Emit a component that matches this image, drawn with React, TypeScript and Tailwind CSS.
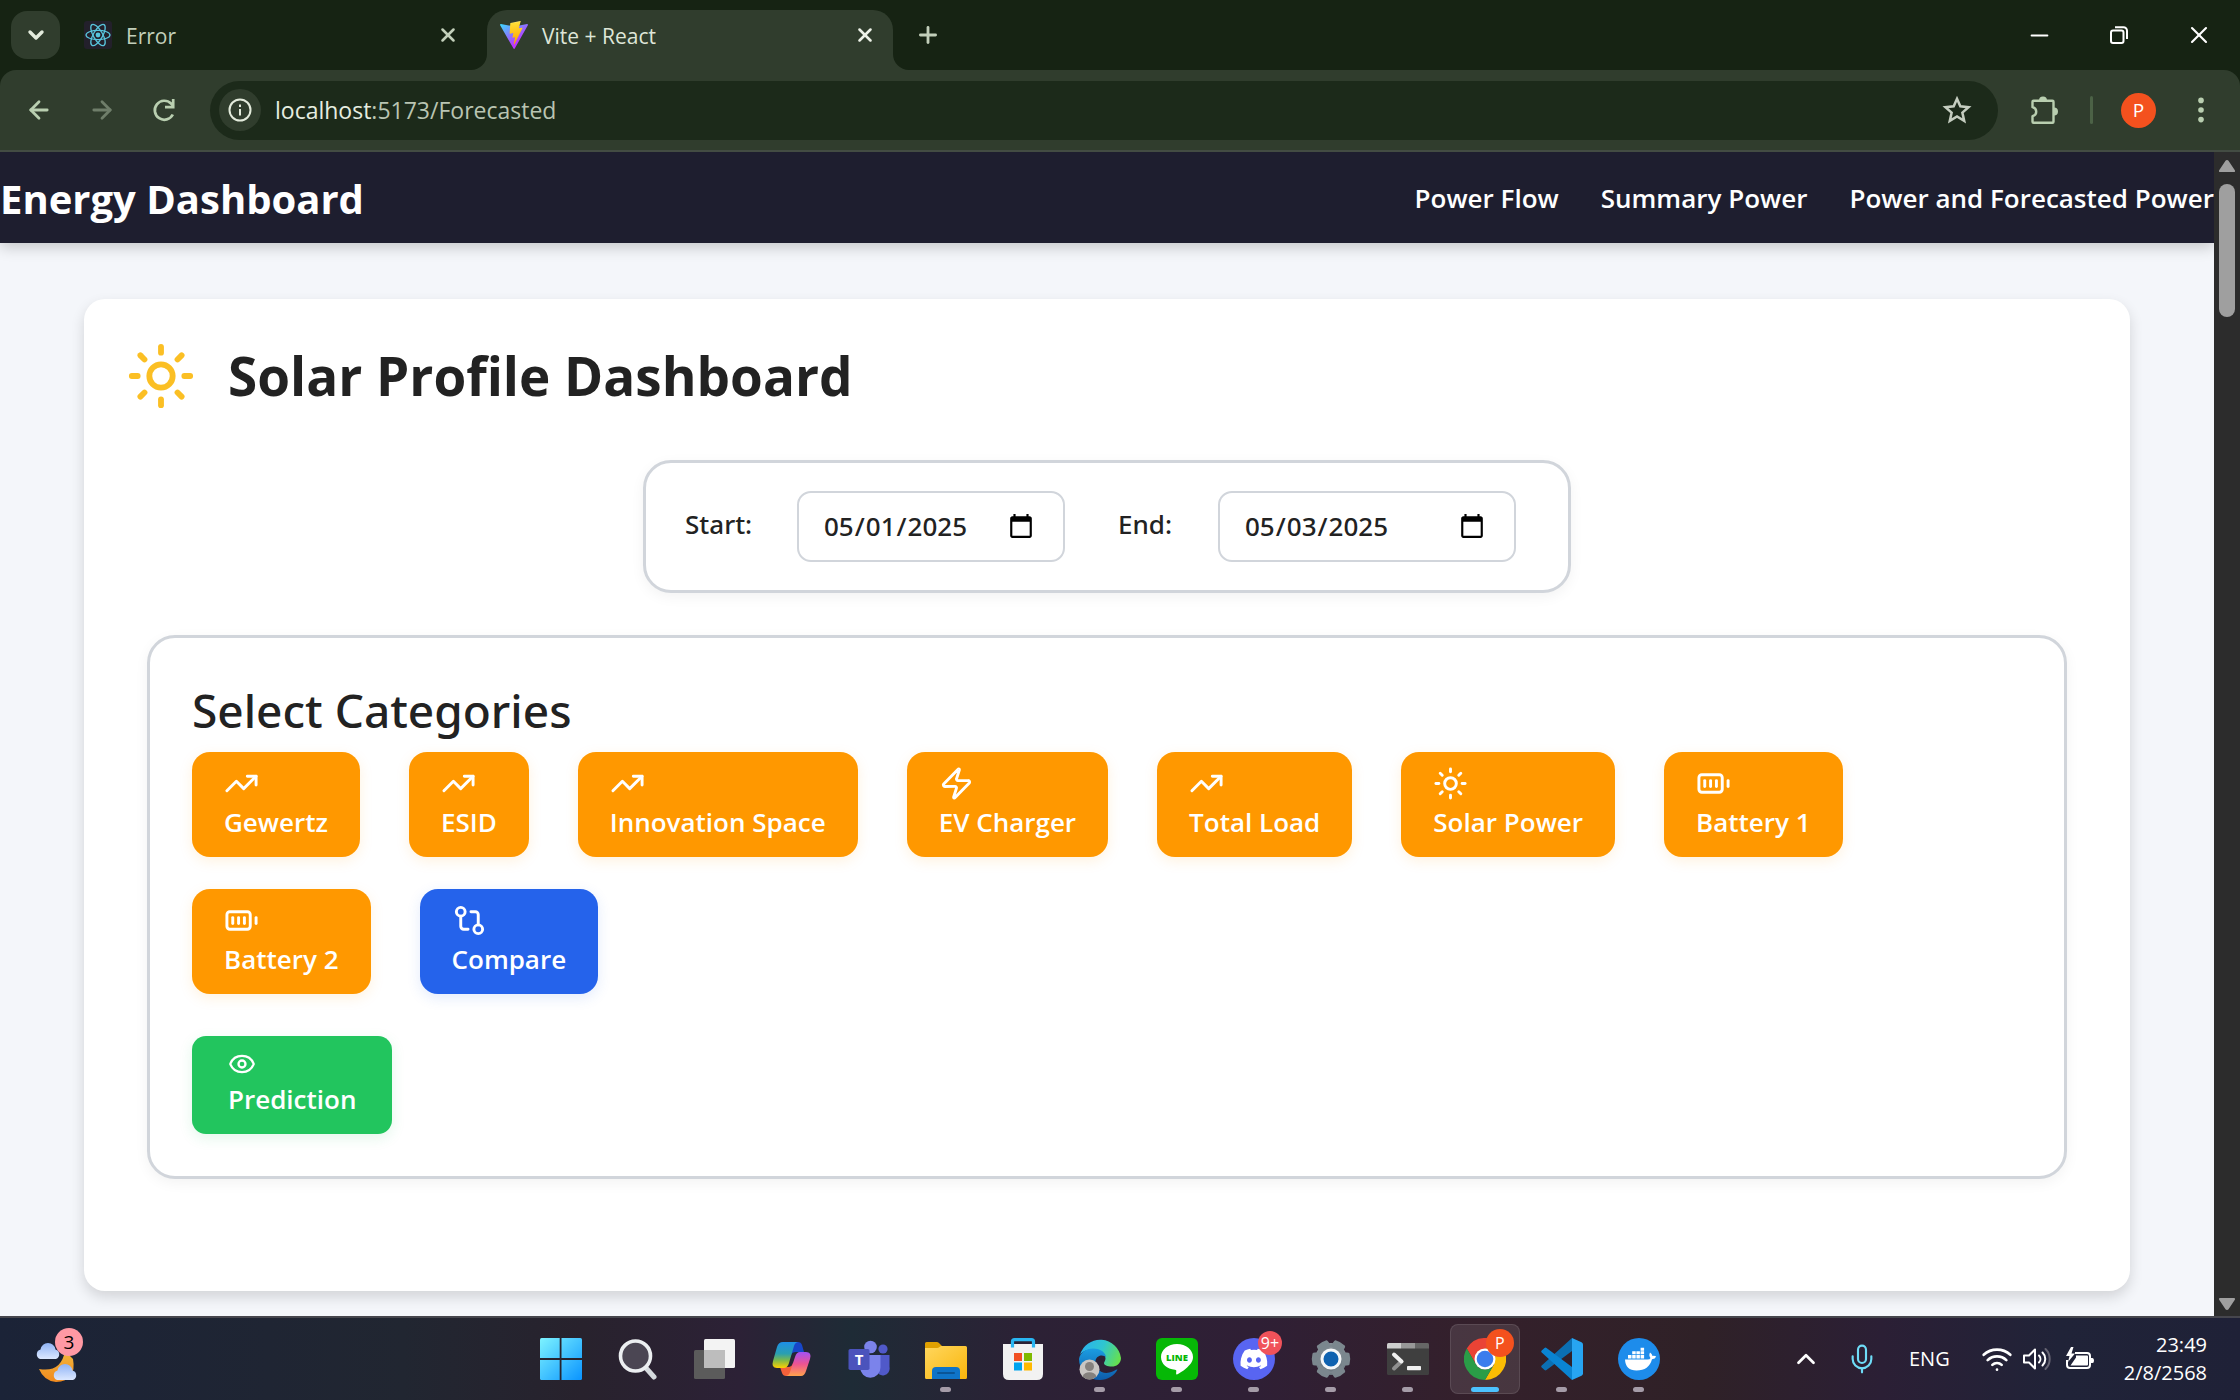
import React from "react";
import {
  TrendingUp, Zap, Sun, BatteryFull, GitCompare, Eye, X, Plus, Minus, ChevronDown, ChevronUp, ArrowLeft, ArrowRight, Mic, Wifi,
} from "lucide-react";

const categories = [
  { label: "Gewertz", Icon: TrendingUp },
  { label: "ESID", Icon: TrendingUp },
  { label: "Innovation Space", Icon: TrendingUp },
  { label: "EV Charger", Icon: Zap },
  { label: "Total Load", Icon: TrendingUp },
  { label: "Solar Power", Icon: Sun },
  { label: "Battery 1", Icon: BatteryFull },
  { label: "Battery 2", Icon: BatteryFull },
];

function ReactLogo() {
  return (
    <svg viewBox="0 0 28 28" className="size-7">
      <rect width="28" height="28" rx="3" fill="#23202b" />
      <g fill="none" stroke="#58c4dc" strokeWidth="1.3">
        <ellipse cx="14" cy="14" rx="12" ry="4.6" />
        <ellipse cx="14" cy="14" rx="12" ry="4.6" transform="rotate(60 14 14)" />
        <ellipse cx="14" cy="14" rx="12" ry="4.6" transform="rotate(120 14 14)" />
      </g>
      <circle cx="14" cy="14" r="2.4" fill="#58c4dc" />
    </svg>
  );
}

function ViteLogo() {
  return (
    <svg viewBox="0 0 256 257" className="size-7">
      <defs>
        <linearGradient id="va" x1="-.8%" x2="57.6%" y1="7.7%" y2="78.4%">
          <stop offset="0%" stopColor="#41D1FF" />
          <stop offset="100%" stopColor="#BD34FE" />
        </linearGradient>
        <linearGradient id="vb" x1="43.4%" x2="50.3%" y1="2.2%" y2="89%">
          <stop offset="0%" stopColor="#FFEA83" />
          <stop offset="8.3%" stopColor="#FFDD35" />
          <stop offset="100%" stopColor="#FFA800" />
        </linearGradient>
      </defs>
      <path fill="url(#va)" d="M255.153 37.938L134.897 252.976c-2.483 4.44-8.862 4.466-11.382.048L.875 37.958c-2.746-4.814 1.371-10.646 6.827-9.67l120.385 21.517a6.537 6.537 0 0 0 2.322-.004l117.867-21.483c5.438-.991 9.574 4.796 6.877 9.62Z" />
      <path fill="url(#vb)" d="M185.432.063L96.44 17.501a3.268 3.268 0 0 0-2.634 3.014l-5.474 92.456a3.268 3.268 0 0 0 3.997 3.378l24.777-5.718c2.318-.535 4.413 1.507 3.936 3.838l-7.361 36.047c-.495 2.426 1.782 4.5 4.151 3.78l15.304-4.649c2.372-.72 4.652 1.36 4.15 3.788l-11.698 56.621c-.732 3.542 3.979 5.473 5.943 2.437l1.313-2.028l72.516-144.72c1.215-2.423-.88-5.186-3.54-4.672l-25.505 4.922c-2.396.462-4.435-1.77-3.759-4.114l16.646-57.705c.677-2.35-1.37-4.583-3.769-4.113Z" />
    </svg>
  );
}

function TabStrip() {
  return (
    <div className="flex h-[70px] shrink-0 items-end bg-[#162313] text-[21px] text-[#c2cfba]">
      <button aria-label="Search tabs" className="mb-[11px] ml-[11px] flex h-12 w-[49px] items-center justify-center rounded-2xl bg-[#303d2d] text-[#e3ebdc]">
        <ChevronDown size={24} strokeWidth={3.4} />
      </button>
      <div className="flex h-[70px] w-[427px] items-center pr-7 pl-6">
        <ReactLogo />
        <span className="ml-[14px] flex-1 pt-1">Error</span>
        <button aria-label="Close Error tab"><X size={22} strokeWidth={2.8} /></button>
      </div>
      <div className="relative flex h-[60px] w-[406px] items-center rounded-t-[20px] bg-[#303d2d] pr-[17px] pb-[10px] pl-[13px] text-[#dfe6d8]">
        <svg viewBox="0 0 16 16" className="absolute bottom-0 -left-4 size-4 fill-[#303d2d]"><path d="M16 0v16H0A16 16 0 0 0 16 0Z" /></svg>
        <svg viewBox="0 0 16 16" className="absolute -right-4 bottom-0 size-4 fill-[#303d2d]"><path d="M0 0v16h16A16 16 0 0 1 0 0Z" /></svg>
        <ViteLogo />
        <span className="ml-[14px] flex-1 pt-1">Vite + React</span>
        <button aria-label="Close Vite + React tab" className="text-[#eef3e9]"><X size={22} strokeWidth={2.8} /></button>
      </div>
      <button aria-label="New tab" className="mb-[22px] ml-[22px]"><Plus size={26} strokeWidth={2.6} /></button>
      <div className="ml-auto flex h-[70px] items-center gap-[57px] pr-[27px] text-white">
        <button aria-label="Minimize"><Minus size={27} strokeWidth={1.8} /></button>
        <button aria-label="Restore">
          <svg viewBox="0 0 18 18" className="size-[18px] fill-none stroke-white stroke-2">
            <rect x="1" y="4.5" width="12.5" height="12.5" rx="2" />
            <path d="M5 1.2h8.500a3.500 3.500 0 0 1 3.500 3.500V13" />
          </svg>
        </button>
        <button aria-label="Close window"><X size={28} strokeWidth={1.8} /></button>
      </div>
    </div>
  );
}

function Toolbar() {
  return (
    <div className="bg-[#162313]">
      <div className="flex h-[82px] items-center rounded-t-2xl border-b-2 border-[#434c43] bg-[#303d2d] text-[#b9cfb0]">
        <div className="flex w-[210px] items-center gap-[35px] pl-[25px]">
          <button aria-label="Back"><ArrowLeft size={28} strokeWidth={2.4} /></button>
          <button aria-label="Forward" className="text-[#6f7e6a]"><ArrowRight size={28} strokeWidth={2.4} /></button>
          <button aria-label="Reload">
            <svg viewBox="0 0 26 26" className="size-[26px]">
              <path fill="none" stroke="#b9cfb0" strokeWidth="2.700" d="M21.800 17.500A9.500 9.500 0 1 1 20 6.500l2 2M22.200 2v8.200H14" />
            </svg>
          </button>
        </div>
        <div className="flex h-[59px] flex-1 items-center rounded-full bg-[#1c2a1a] pr-[25px] pl-[9px]">
          <button aria-label="Site information" className="flex size-[42px] items-center justify-center rounded-full bg-[#303d2d]">
            <svg viewBox="0 0 24 24" className="size-6 fill-none stroke-[#e3ebdc] stroke-2">
              <circle cx="12" cy="12" r="10.500" />
              <path d="M12 11v6.500M12 6.500v2.400" />
            </svg>
          </button>
          <p className="ml-[14px] flex-1 text-[23px] text-[#b9c4b2]"><span className="text-[#e6ede0]">localhost</span>:5173/Forecasted</p>
          <button aria-label="Bookmark this tab">
            <svg viewBox="0 0 28 28" className="size-8 fill-none stroke-[#c5cdc0] stroke-[2.200]">
              <path d="m14 4.200 2.900 6.600 7.200.7-5.400 4.800 1.600 7.200-6.300-3.800-6.300 3.800 1.600-7.200-5.400-4.800 7.200-.7Z" />
            </svg>
          </button>
        </div>
        <div className="flex items-center pr-[34px] pl-8">
          <button aria-label="Extensions">
            <svg viewBox="0 0 30 30" className="size-[30px]">
              <path fill="none" stroke="#b9cfb0" strokeWidth="2.400" strokeLinejoin="round" d="M3.500 5.700h19q1 0 1 1v20q0 1-1 1h-19q-1 0-1-1v-5.500c5-1.500 5-7.500 0-9V6.700q0-1 1-1Z" />
              <path fill="#b9cfb0" d="M9 5.500a4 4 0 0 1 8 0ZM24 12.500a4 4 0 0 1 0 8Z" />
            </svg>
          </button>
          <span className="ml-[30px] h-7 w-[3px] rounded bg-[#4c6246]" />
          <button aria-label="Profile" className="ml-7 size-[35px] rounded-full bg-[#f4511e] text-[19px] leading-none text-white">P</button>
          <button aria-label="Menu" className="ml-10">
            <svg viewBox="0 0 10 28" className="h-7 w-[10px] fill-[#b9cfb0]">
              <circle cx="5" cy="4.400" r="2.800" /><circle cx="5" cy="14" r="2.800" /><circle cx="5" cy="23.600" r="2.800" />
            </svg>
          </button>
        </div>
      </div>
    </div>
  );
}

const dateInput =
  "h-[71px] rounded-[14px] border-2 border-[#d1d5db] bg-white pr-7 pl-6 font-medium text-[#222] [&::-webkit-calendar-picker-indicator]:size-7 [&::-webkit-calendar-picker-indicator]:p-0";

function Dashboard() {
  return (
    <div className="min-w-0 flex-1 overflow-hidden bg-[#f4f6fa]">
      <header className="flex h-[91px] items-center justify-between bg-[#1e1e2f] pt-0.5 text-white shadow-[0_4px_14px_rgba(0,0,0,0.2)]">
        <p className="text-[40px] font-bold">Energy Dashboard</p>
        <nav className="flex gap-[42px] text-[26px] font-semibold whitespace-nowrap">
          <a href="#flow">Power Flow</a>
          <a href="#summary">Summary Power</a>
          <a href="#forecast">Power and Forecasted Power</a>
        </nav>
      </header>
      <main className="mx-[84px] mt-14 rounded-[21px] bg-white px-[42px] pt-[42px] pb-28 shadow-[0_6px_14px_rgba(0,0,0,0.14)]">
        <h1 className="flex items-center gap-8 text-[53px] leading-[70px] font-bold text-[#222]">
          <Sun size={70} color="#fbbf24" />
          Solar Profile Dashboard
        </h1>
        <form className="mx-auto mt-[49px] flex w-fit items-center rounded-[28px] border-3 border-[#d1d5db] bg-white py-7 pr-[52px] pl-[39px] font-['Noto_Sans',sans-serif] text-[26px] text-[#222] shadow-[0_4px_14px_rgba(0,0,0,0.05)]">
          <label htmlFor="start" className="w-[112px] pb-1 font-medium">Start:</label>
          <input id="start" type="date" defaultValue="2025-05-01" className={dateInput + " w-[268px]"} />
          <label htmlFor="end" className="ml-[53px] w-[100px] pb-1 font-medium">End:</label>
          <input id="end" type="date" defaultValue="2025-05-03" className={dateInput + " w-[298px]"} />
        </form>
        <section className="mx-[21px] mt-[42px] rounded-[28px] border-3 border-[#d1d5db] bg-white p-[42px] shadow-[0_4px_14px_rgba(0,0,0,0.05)]">
          <h2 className="mb-3 font-['Noto_Sans',sans-serif] text-[46px] leading-[60px] font-medium text-[#222]">Select Categories</h2>
          <div className="flex flex-wrap gap-x-[49px] gap-y-8 text-[26px] leading-[42px] font-semibold text-white">
            {categories.map(({ label, Icon }) => (
              <button key={label} className="rounded-[18px] bg-[#ff9800] px-8 py-[14px] text-left shadow-[0_4px_14px_rgba(255,152,0,0.13)]">
                <Icon size={35} />
                {label}
              </button>
            ))}
            <button className="rounded-[18px] bg-[#2563eb] px-8 py-[14px] text-left shadow-[0_4px_14px_rgba(37,99,235,0.13)]">
              <GitCompare size={35} />
              Compare
            </button>
          </div>
          <button className="mt-[42px] rounded-[14px] bg-[#22c55e] px-9 py-[14px] text-left text-[26px] leading-[42px] font-semibold text-white shadow-[0_4px_14px_rgba(34,197,94,0.13)]">
            <Eye size={28} />
            Prediction
          </button>
        </section>
      </main>
    </div>
  );
}

function Scrollbar() {
  return (
    <div className="flex w-[26px] shrink-0 flex-col items-center bg-[#2c2c2c] pt-2 pb-1.5">
      <svg viewBox="0 0 16 12" className="h-3 w-4 fill-[#9f9f9f]"><path d="M8 0q1 0 1.500.8L16 10.500q.3 1.500-1 1.500H1q-1.300 0-1-1.500L6.500.8Q7 0 8 0Z" /></svg>
      <span className="mt-3 h-[133px] w-4 rounded-full bg-[#9f9f9f]" />
      <svg viewBox="0 0 16 12" className="mt-auto h-3 w-4 fill-[#9f9f9f]"><path d="M8 12q1 0 1.500-.8L16 1.500q.3-1.500-1-1.500H1q-1.300 0-1 1.500l6.500 9.700q.5.8 1.500.8Z" /></svg>
    </div>
  );
}

function WindowsIcon() {
  return (
    <svg viewBox="0 0 42 42" className="size-[42px]">
      <linearGradient id="w1" x1="0" y1="0" x2="1" y2="1"><stop stopColor="#7df3ff" /><stop offset="1" stopColor="#0a94ff" /></linearGradient>
      <mask id="wm"><rect width="42" height="42" rx="1.500" fill="#fff" /><path d="M20.600 0v42M0 21h42" stroke="#000" strokeWidth="1.800" /></mask>
      <rect width="42" height="42" fill="url(#w1)" mask="url(#wm)" />
    </svg>
  );
}

function SearchIcon() {
  return (
    <svg viewBox="0 0 42 42" className="size-[42px]">
      <path d="M29 30l8 9" stroke="#d5dade" strokeWidth="5" strokeLinecap="round" />
      <circle cx="18.500" cy="18" r="15" fill="#4b4653" stroke="#eceff1" strokeWidth="3.600" />
    </svg>
  );
}

function TaskViewIcon() {
  return (
    <svg viewBox="0 0 42 42" className="size-[42px]">
      <rect x="0" y="12" width="31" height="29" rx="1.500" fill="#5b5b5b" />
      <rect x="10" y="1" width="31" height="29" rx="1.500" fill="#f3f3f3" />
      <path d="M10 12h21v18H11.500a1.500 1.500 0 0 1-1.500-1.500Z" fill="#bdbdbd" />
    </svg>
  );
}

function CopilotIcon() {
  return (
    <svg viewBox="0 0 42 42" className="size-[42px]">
      <linearGradient id="c1" x1="0" y1="0" x2="0" y2="1"><stop stopColor="#1d8fe8" /><stop offset=".45" stopColor="#2a9fb0" /><stop offset=".7" stopColor="#7cb94a" /><stop offset="1" stopColor="#ffd000" /></linearGradient>
      <linearGradient id="c2" x1="0" y1="0" x2="0" y2="1"><stop stopColor="#a352f5" /><stop offset=".5" stopColor="#ee5391" /><stop offset="1" stopColor="#ffa24c" /></linearGradient>
      <path d="M20 4h7q3 0 4 3l2 7h-8q-4 0-5 3l-2-1Z" fill="#1746c9" />
      <path d="M22 38h-7q-3 0-4-3l-2-6h8q4 0 5-4l2 2Z" fill="#f4603a" />
      <path d="M12 4h15q-3 .5-4 4l-5 17q-1.500 5-5 5H6q-6 0-4-7L6 9q1.500-5 6-5Z" fill="url(#c1)" />
      <path d="M30 38H15q3-.5 4-4l5-15q1.500-5 5-5h6q6 0 4 7l-4 12q-1.500 5-5 5Z" fill="url(#c2)" />
    </svg>
  );
}

function TeamsIcon() {
  return (
    <svg viewBox="0 0 42 42" className="size-[42px]">
      <circle cx="35" cy="11" r="4.600" fill="#5059c9" />
      <path d="M28 17h13.500v12a6.500 6.500 0 0 1-13.500 3Z" fill="#5059c9" />
      <circle cx="22.500" cy="9" r="6.300" fill="#7b83eb" />
      <path d="M12 17h20.500v12.500a10.200 10.200 0 0 1-20.400 0Z" fill="#7b83eb" />
      <rect x="0.500" y="11" width="21" height="21" rx="1.800" fill="#4b53bc" />
      <text x="11" y="27" fontSize="15" fontWeight="700" textAnchor="middle" fill="#fff">T</text>
    </svg>
  );
}

function FolderIcon() {
  return (
    <svg viewBox="0 0 42 42" className="size-[42px]">
      <linearGradient id="f1" x1="0" y1="0" x2="1" y2="1"><stop stopColor="#ffd75e" /><stop offset="1" stopColor="#f9b50b" /></linearGradient>
      <path d="M0 5.500Q0 4 1.500 4H12q1.500 0 2.500 1.500L17 8v6H0Z" fill="#e0a000" />
      <path d="M0 10h12q1.500 0 2.500-1l1.500-1h24.500Q42 8 42 9.500v30q0 1.500-1.500 1.500h-39Q0 41 0 39.500Z" fill="url(#f1)" />
      <path d="M7 41v-8q0-4 4-4h20q4 0 4 4v8Z" fill="#0f74c8" />
      <path d="M13 35h16" stroke="#0a5597" strokeWidth="2" strokeLinecap="round" />
    </svg>
  );
}

function StoreIcon() {
  return (
    <svg viewBox="0 0 42 42" className="size-[42px]">
      <path d="M1 6h40v30q0 6-6 6H7q-6 0-6-6Z" fill="#f2f2f2" />
      <path d="M10.500 9.500V3.500Q10.500 1.600 12.500 1.600h17q2 0 2 1.900v6" fill="none" stroke="#29b6f2" strokeWidth="3.200" />
      <path d="M12 15h8v8h-8Z" fill="#f25022" /><path d="M22 15h8v8h-8Z" fill="#7fba00" />
      <path d="M12 24.500h8v8h-8Z" fill="#00a4ef" /><path d="M22 24.500h8v8h-8Z" fill="#ffb900" />
    </svg>
  );
}

function EdgeIcon() {
  return (
    <svg viewBox="0 0 42 42" className="size-[42px]">
      <linearGradient id="e1" x1="0" y1=".3" x2="1" y2=".6"><stop stopColor="#2ab2ee" /><stop offset=".5" stopColor="#2fc6d0" /><stop offset="1" stopColor="#66e04e" /></linearGradient>
      <linearGradient id="e2" x1="0" y1="0" x2="0" y2="1"><stop stopColor="#1b9de2" /><stop offset="1" stopColor="#0d5cab" /></linearGradient>
      <path d="M1 17A21 21 0 0 1 42 20c0 6-5 8.500-9 8.500-5 0-8-1.500-8-3.500 0-1 1.500-2 1.500-4.500 0-5-6-9-13-9C6 11.500 2 15 1 17Z" fill="url(#e1)" />
      <path d="M0 21C1 15 7 10.500 14 10.500c8 0 13 4.500 13 9-2-3-9-3-10.500 3-1.500 8 6 14 14 12 4-1 7-3.500 8-3-3 6-10 10.500-17.500 10.500A21 21 0 0 1 0 21Z" fill="url(#e2)" />
      <circle cx="10.500" cy="31.500" r="10" fill="#c9c6c3" />
      <circle cx="10.500" cy="28.500" r="4.500" fill="#85817e" />
      <path d="M3.500 38.500a7.500 6.500 0 0 1 14 0 10 10 0 0 1-14 0Z" fill="#85817e" />
    </svg>
  );
}

function LineIcon() {
  return (
    <svg viewBox="0 0 42 42" className="size-[42px]">
      <rect width="42" height="42" rx="6" fill="#06b806" />
      <path d="M21 6c9 0 16 5.700 16 13 0 4.500-3 8-7 11.500-3 2.600-7 5-9 6-1 .3-1-.5-.7-3.500.1-.8-.3-1-1.300-1.200C11 31 5 26 5 19 5 11.700 12 6 21 6Z" fill="#fff" />
      <text x="21" y="23" fontSize="9.500" fontWeight="800" textAnchor="middle" fill="#06b806">LINE</text>
    </svg>
  );
}

function DiscordIcon() {
  return (
    <svg viewBox="0 0 42 42" className="size-[42px]">
      <circle cx="21" cy="21" r="21" fill="#5865f2" />
      <g transform="translate(7.500 7.500) scale(1.120)">
        <path fill="#fff" d="M20.300 4.400A19.800 19.800 0 0 0 15.400 2.900l-.6 1.200a18.300 18.300 0 0 0-5.500 0L8.700 2.900a19.700 19.700 0 0 0-4.900 1.500C.5 9 -.3 13.600.1 18.100a20 20 0 0 0 6 3l1.300-2-1.900-.9.4-.3a14.200 14.200 0 0 0 12.100 0l.4.300-1.900.9 1.300 2a19.800 19.800 0 0 0 6-3c.5-5.200-.8-9.700-3.500-13.700ZM8 15.300c-1.200 0-2.200-1.100-2.200-2.400S6.800 10.500 8 10.500s2.200 1.100 2.200 2.400-1 2.400-2.200 2.400Zm8 0c-1.200 0-2.200-1.100-2.200-2.400s1-2.400 2.200-2.400 2.200 1.100 2.200 2.400-1 2.400-2.200 2.400Z" />
      </g>
    </svg>
  );
}

function SettingsIcon() {
  return (
    <svg viewBox="0 0 42 42" className="size-[42px]">
      <linearGradient id="s1" gradientUnits="userSpaceOnUse" x1="0" y1="0" x2="0" y2="42"><stop stopColor="#8f989f" /><stop offset="1" stopColor="#66737b" /></linearGradient>
      <g fill="#7b878e">
        <circle cx="21" cy="21" r="16" fill="url(#s1)" />
        {[0, 60, 120, 180, 240, 300].map((a) => (
          <path key={a} d="M32 12.500l1.500 1.500q1 .8 2.500.6 3-.2 3.500.9a21 21 0 0 1 0 11q-.5 1.100-3.500.9-1.500-.2-2.500.6L32 29.500Z" transform={`rotate(${a} 21 21)`} />
        ))}
      </g>
      <circle cx="21" cy="21" r="9" fill="#0f62b0" stroke="#f5f7f8" strokeWidth="3" />
    </svg>
  );
}

function TerminalIcon() {
  return (
    <svg viewBox="0 0 42 42" className="size-[42px]">
      <rect y="5" width="42" height="32" rx="1.500" fill="#3f3f3f" />
      <path d="M0 10.500V6.500Q0 5 1.500 5H14v5.500Z" fill="#cfcfcf" /><path d="M14 5h14v5.500H14Z" fill="#989898" /><path d="M28 5h12.500Q42 5 42 6.500v4H28Z" fill="#666" />
      <path d="M7 30.500l7.500-7" stroke="#8f8f8f" strokeWidth="4" strokeLinecap="round" />
      <path d="M7 16.500l7.500 7" stroke="#f0f0f0" strokeWidth="4" strokeLinecap="round" />
      <rect x="20" y="28" width="14" height="4.300" rx=".8" fill="#f0f0f0" />
    </svg>
  );
}

function ChromeIcon() {
  return (
    <svg viewBox="0 0 42 42" className="size-[42px]">
      <path d="M2.800 10.500a21 21 0 0 1 36.400 0H21L11.900 26.200Z" fill="#ea4335" />
      <path d="M39.200 10.500A21 21 0 0 1 21 42l9.100-15.800L21 10.500Z" fill="#fbbc04" />
      <path d="M21 42A21 21 0 0 1 2.800 10.500l9.100 15.700a10.500 10.500 0 0 0 18.200 0Z" fill="#2a9d47" />
      <circle cx="21" cy="21" r="10.500" fill="#fff" />
      <circle cx="21" cy="21" r="8.300" fill="#3b7ded" />
    </svg>
  );
}

function CodeIcon() {
  return (
    <svg viewBox="0 0 42 42" className="size-[42px]">
      <path d="M31 0v13L5.500 32q-1 .8-2 0L.7 29.500q-1-1 0-2Z" fill="#0b6fb3" />
      <path d="M31 42V29L5.500 10q-1-.8-2 0L.7 12.500q-1 1 0 2Z" fill="#0a84d2" />
      <path d="M31 0l9.500 4.200Q42 5 42 6.500v29q0 1.500-1.500 2.300L31 42Z" fill="#27a5f2" />
    </svg>
  );
}

function DockerIcon() {
  return (
    <svg viewBox="0 0 42 42" className="size-[42px]">
      <circle cx="21" cy="21" r="21" fill="#1d8ceb" />
      <path d="M7 21.500h22.500q2.500 0 3-1.500-2-2.500-.5-5.500 2 1 2.500 3.500 2-.5 3.700.5-1 2.500-4.200 2.800Q31 32.500 18.500 32.500 7.500 32.500 7 21.500Z" fill="#fff" />
      <path d="M10 17h3.500v3.500H10ZM14.200 17h3.500v3.500h-3.500ZM18.400 17h3.500v3.500h-3.500ZM22.600 17h3.500v3.500h-3.500ZM14.200 13.300h3.500v3h-3.500ZM18.400 13.300h3.500v3h-3.500ZM22.600 13.300h3.500v3h-3.500ZM22.600 9.700h3.500v3h-3.500Z" fill="#fff" />
    </svg>
  );
}

const apps = [
  { name: "Start", Icon: WindowsIcon, running: false },
  { name: "Search", Icon: SearchIcon, running: false },
  { name: "Task view", Icon: TaskViewIcon, running: false },
  { name: "Copilot", Icon: CopilotIcon, running: false },
  { name: "Teams", Icon: TeamsIcon, running: false },
  { name: "File Explorer", Icon: FolderIcon, running: true },
  { name: "Store", Icon: StoreIcon, running: false },
  { name: "Edge", Icon: EdgeIcon, running: true },
  { name: "LINE", Icon: LineIcon, running: true },
  { name: "Discord", Icon: DiscordIcon, running: true, badge: "9+" },
  { name: "Settings", Icon: SettingsIcon, running: true },
  { name: "Terminal", Icon: TerminalIcon, running: true },
  { name: "Chrome", Icon: ChromeIcon, running: true, active: true },
  { name: "VS Code", Icon: CodeIcon, running: true },
  { name: "Docker", Icon: DockerIcon, running: true },
];

function WeatherIcon() {
  const cloud = "M5 16a5 5 0 0 1 .5-9.500Q7 0 13 0t7.500 6.500A5 5 0 0 1 21 16Z";
  return (
    <svg viewBox="0 0 48 48" className="size-12">
      <linearGradient id="m1" x1="0" y1="0" x2="0" y2="1"><stop stopColor="#f3b73c" /><stop offset="1" stopColor="#f08a1f" /></linearGradient>
      <linearGradient id="m2" x1="0" y1="0" x2="0" y2="1"><stop stopColor="#8fb3f5" /><stop offset="1" stopColor="#dce8ff" /></linearGradient>
      <path d="M38 24q4 22-17 23Q9 46 4 34q22 4 26-18Z" fill="url(#m1)" />
      <path d={cloud} fill="url(#m2)" transform="translate(0 8)" />
      <path d={cloud} fill="url(#m2)" transform="translate(17 29)" />
    </svg>
  );
}

function Taskbar() {
  return (
    <footer className="flex h-[84px] shrink-0 items-center border-t-2 border-[#46464d] bg-[linear-gradient(90deg,#1b2337_0%,#212631_18%,#28222d_26%,#2c2136_33%,#1e2b36_38%,#2c2135_46%,#2f1f35_56%,#34202b_66%,#2f2127_76%,#2b1f35_84%,#202338_92%,#1f2137_100%)] text-white">
      <div className="grow-[489] basis-0 pl-[35px]">
        <button aria-label="Weather" className="relative block size-12">
          <WeatherIcon />
          <span className="absolute -top-[7px] left-5 flex size-7 items-center justify-center rounded-full bg-[#ff99a4] text-[19px] text-black">3</span>
        </button>
      </div>
      <div className="flex gap-[7px]">
        {apps.map(({ name, Icon, running, badge, active }) => (
          <button key={name} aria-label={name} className={"relative flex size-[70px] items-center justify-center rounded-lg border " + (active ? "border-white/10 bg-white/10" : "border-transparent")}>
            <Icon />
            {badge && <span className="absolute top-1.5 right-1.5 flex size-6 items-center justify-center rounded-full bg-[#f0525a] text-[16px]">{badge}</span>}
            {active && <span className="absolute top-1 right-[5px] flex size-7 items-center justify-center rounded-full bg-[#f4511e] text-[16px]">P</span>}
            {running && <span className={"absolute bottom-px h-[5px] rounded-full " + (active ? "w-7 bg-[#4cc2ff]" : "w-[11px] bg-[#a59ca8]")} />}
          </button>
        ))}
      </div>
      <div className="flex grow-[531] basis-0 items-center justify-end pr-[33px] text-[20px]">
        <button aria-label="Show hidden icons"><ChevronUp size={30} strokeWidth={2.2} /></button>
        <Mic size={32} strokeWidth={1.6} color="#6fdcf7" className="ml-[25px]" />
        <span className="ml-[31px]">ENG</span>
        <Wifi size={32} className="ml-[31px]" />
        <svg viewBox="0 0 28 24" className="ml-2.5 h-6 w-7 fill-none stroke-white stroke-2">
          <path strokeLinejoin="round" d="M1 8.500h5l6-6v19l-6-6H1Z" /><path strokeLinecap="round" d="M16 8.500a5 5 0 0 1 0 7M19.500 5.500a9 9 0 0 1 0 13" /><path stroke="#666473" strokeLinecap="round" d="M22.500 2a14 14 0 0 1 0 20" />
        </svg>
        <svg viewBox="0 0 28 24" className="ml-[15px] h-6 w-7">
          <path fill="none" stroke="#fff" strokeWidth="2" d="M9 6h12q3 0 3 3v9q0 3-3 3H4q-3 0-3-3v-5" />
          <path fill="#fff" d="M10 8.500h11q1 0 1 1v8q0 1-1 1H4.500l5.500-8ZM25 11h1.500q1.500 0 1.500 2.500T26.500 16H25ZM5 0 0 9h3.500L2 15l7-8.500H5.500L7.500 0Z" />
        </svg>
        <div className="ml-[30px] text-right leading-7"><p>23:49</p><p>2/8/2568</p></div>
      </div>
    </footer>
  );
}

export default function App() {
  return (
    <div className="flex h-screen flex-col font-['Open_Sans','Noto_Sans',sans-serif]">
      <TabStrip />
      <Toolbar />
      <div className="flex min-h-0 flex-1">
        <Dashboard />
        <Scrollbar />
      </div>
      <Taskbar />
    </div>
  );
}
